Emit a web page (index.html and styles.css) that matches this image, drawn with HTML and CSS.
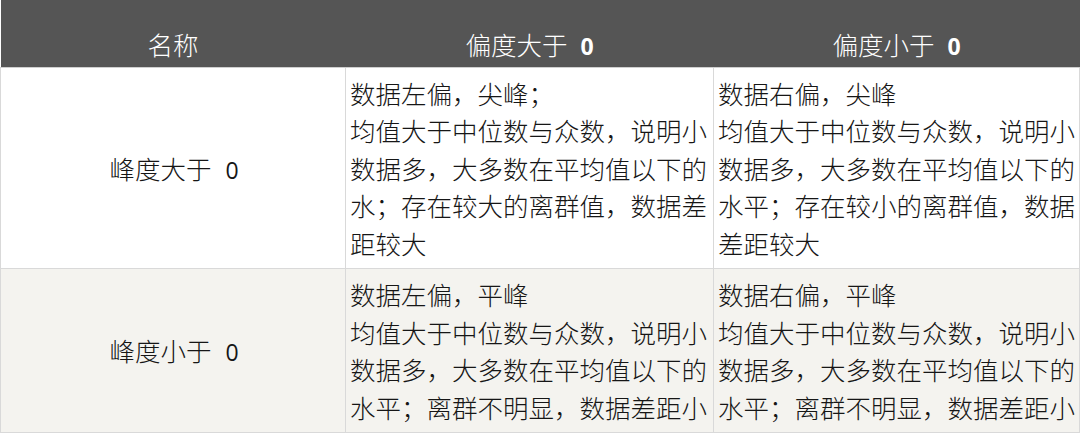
FILE: index.html
```html
<!DOCTYPE html>
<html lang="zh">
<head>
<meta charset="utf-8">
<link rel="stylesheet" href="styles.css">
</head>
<body>
<table class="grid">
  <colgroup>
    <col class="c1"><col class="c2"><col class="c3">
  </colgroup>
  <thead>
    <tr>
      <th>名称</th>
      <th>偏度大于<span class="num">0</span></th>
      <th>偏度小于<span class="num">0</span></th>
    </tr>
  </thead>
  <tbody>
    <tr class="r1">
      <td class="name">峰度大于<span class="num">0</span></td>
      <td>数据左偏，尖峰；<br>均值大于中位数与众数，说明小数据多，大多数在平均值以下的水；存在较大的离群值，数据差距较大</td>
      <td>数据右偏，尖峰<br>均值大于中位数与众数，说明小数据多，大多数在平均值以下的水平；存在较小的离群值，数据差距较大</td>
    </tr>
    <tr class="r2">
      <td class="name">峰度小于<span class="num">0</span></td>
      <td>数据左偏，平峰<br>均值大于中位数与众数，说明小数据多，大多数在平均值以下的水平；离群不明显，数据差距小</td>
      <td>数据右偏，平峰<br>均值大于中位数与众数，说明小数据多，大多数在平均值以下的水平；离群不明显，数据差距小</td>
    </tr>
  </tbody>
</table>
</body>
</html>
```
FILE: styles.css
```css
html, body {
  margin: 0;
  padding: 0;
  background: #ffffff;
}
.grid {
  border-collapse: collapse;
  table-layout: fixed;
  width: 1079px;
  font-family: "Noto Sans CJK SC", sans-serif;
  font-weight: 300;
  font-size: 25.5px;
  line-height: 37.5px;
  color: #161616;
}
.c1 { width: 345px; }
.c2 { width: 368px; }
.c3 { width: 366px; }
.grid th {
  background: #555555;
  color: #ffffff;
  font-weight: 300;
  text-align: center;
  padding: 25px 0 4px;
  border-bottom: 1px solid #cfcfcf;
}
.grid th .num {
  font-weight: 700;
  margin-left: 13px;
}
.grid td {
  border: 1px solid #d9d9d9;
  padding: 6px 2px 7px 4px;
  vertical-align: top;
  text-align: left;
}
.grid td.name {
  text-align: center;
  vertical-align: middle;
}
.num {
  font-family: "Open Sans", sans-serif;
  font-weight: 400;
  font-size: 23px;
  line-height: 1;
  margin-left: 14px;
}
.r2 td {
  background: #f4f3ef;
}
```
